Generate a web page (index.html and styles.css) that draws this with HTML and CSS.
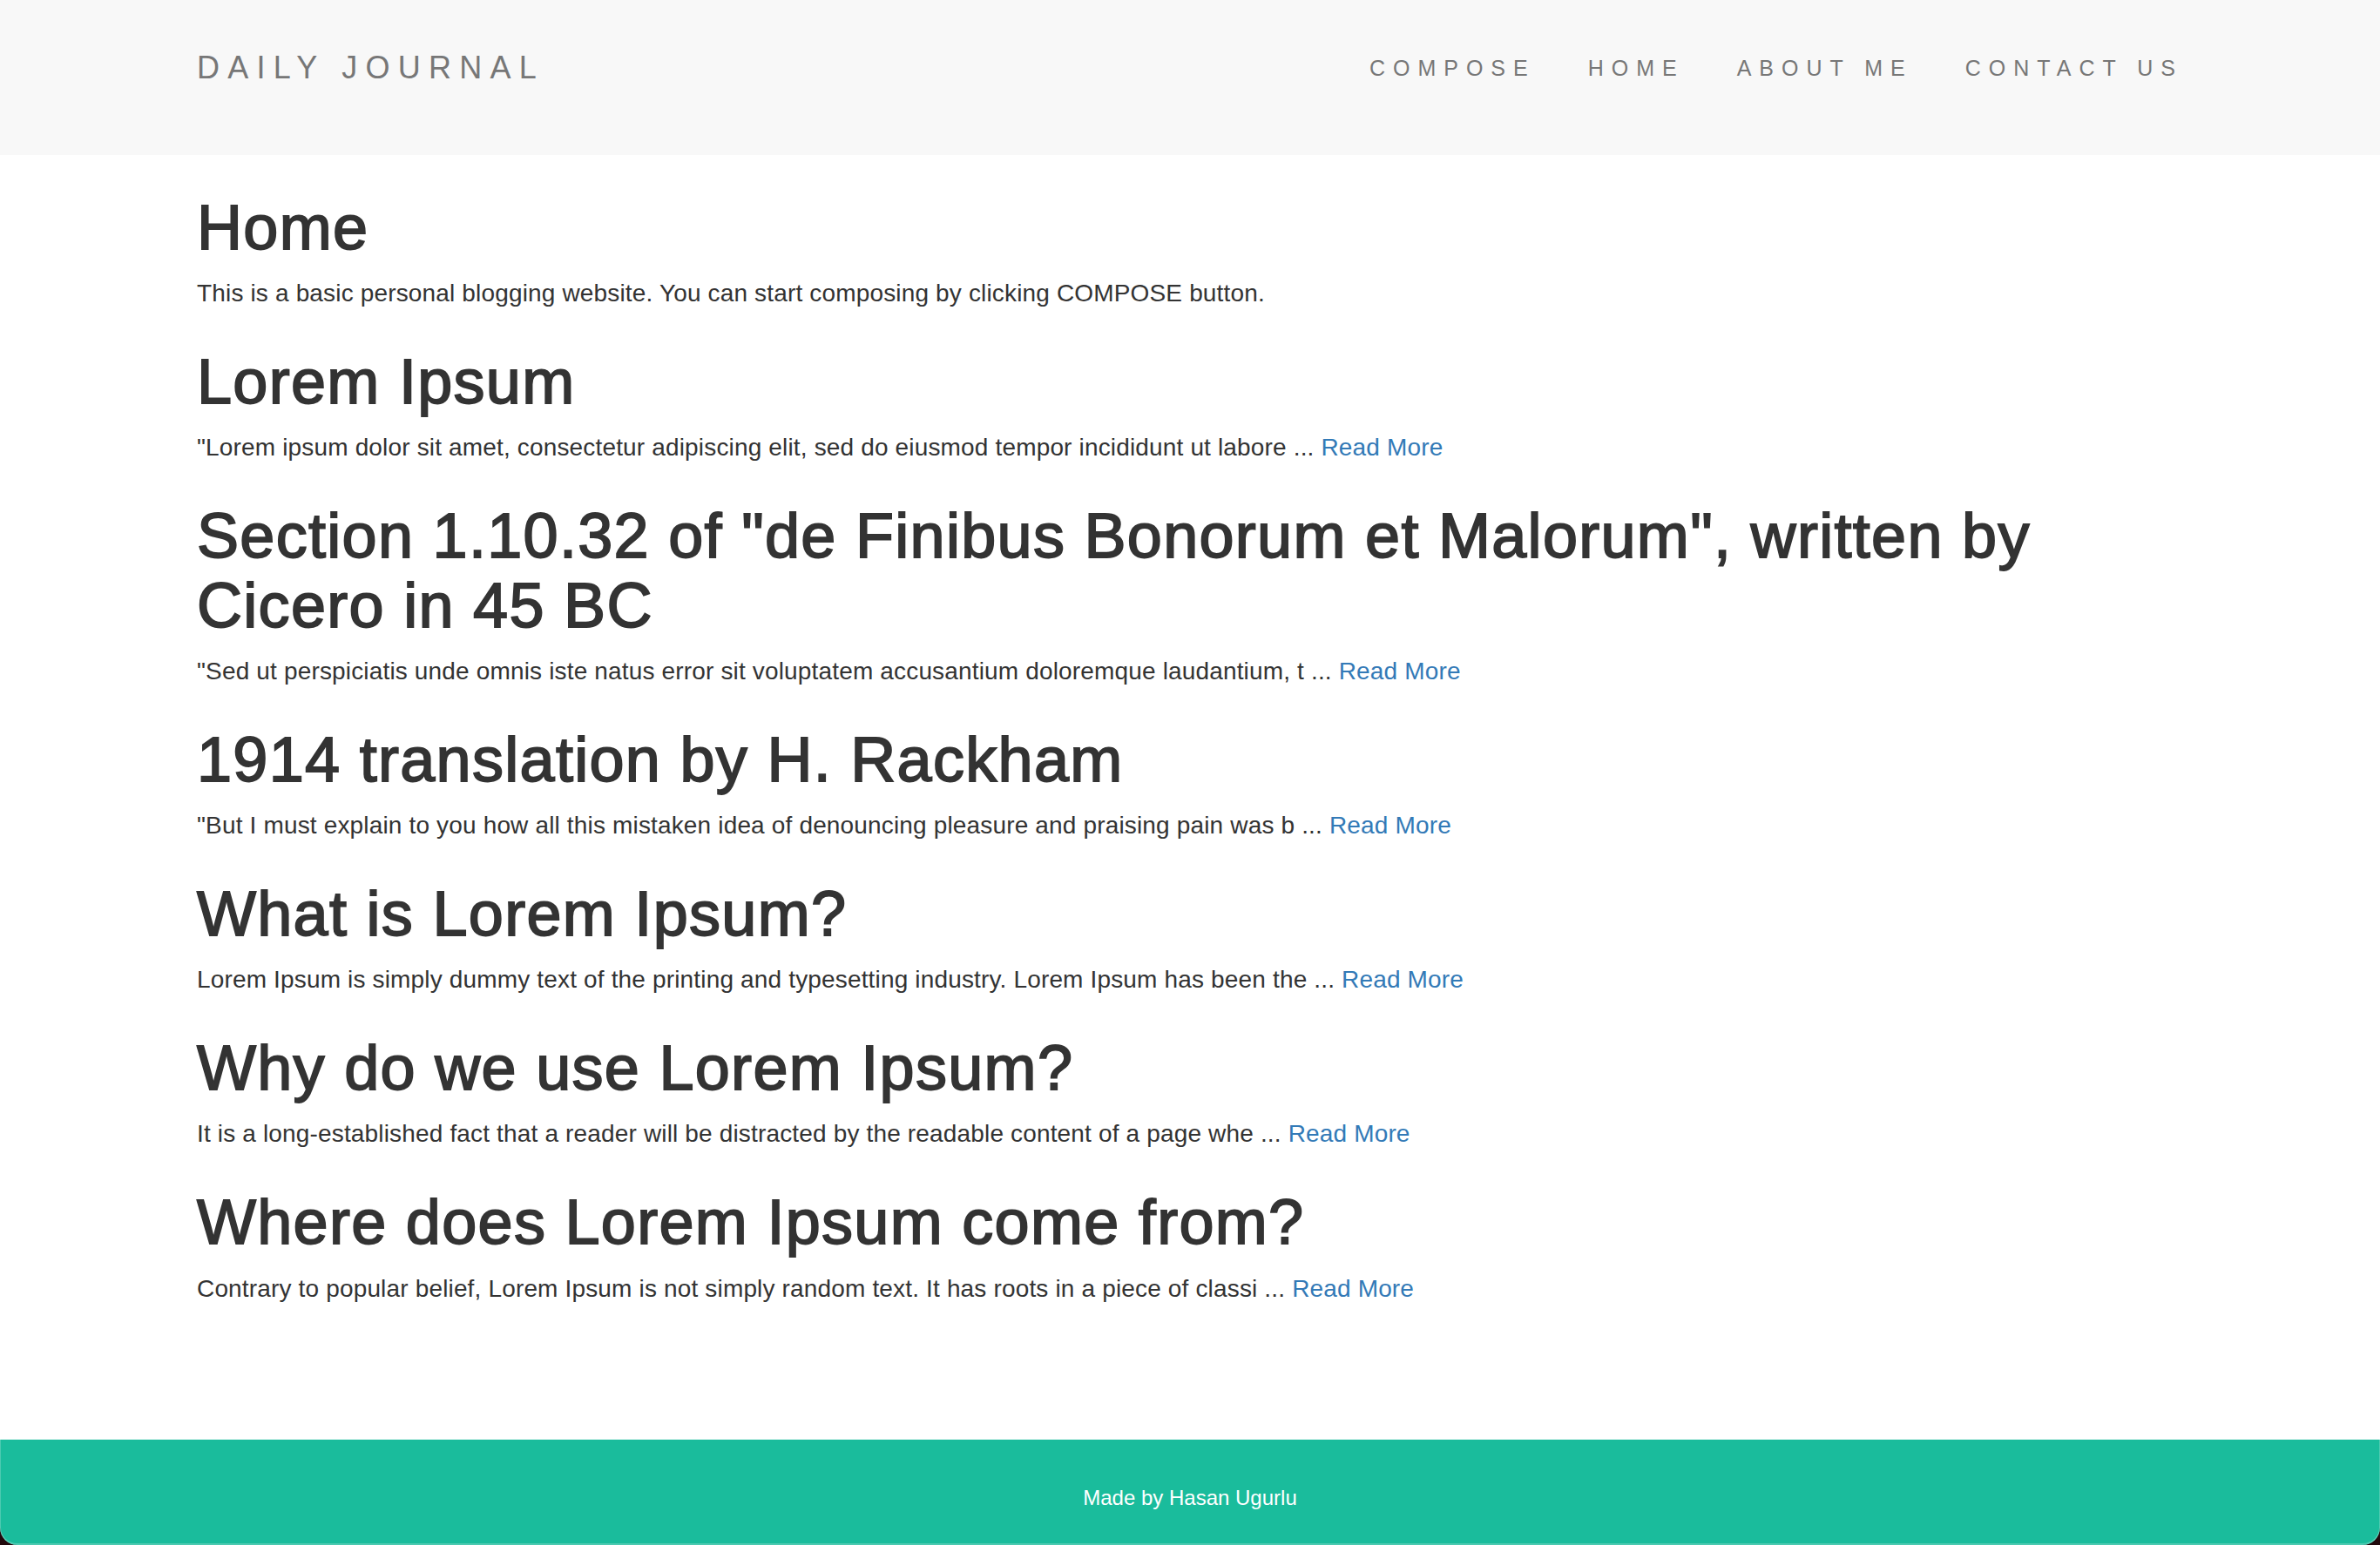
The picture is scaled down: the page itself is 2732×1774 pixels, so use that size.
FILE: index.html
```html
<!DOCTYPE html>
<html lang="en">
<head>
<meta charset="utf-8">
<title>Daily Journal</title>
<link rel="stylesheet" href="styles.css">
</head>
<body>
<div class="page">
  <nav class="navbar">
    <div class="container nav-row">
      <a class="brand" href="#">DAILY JOURNAL</a>
      <ul class="nav-links">
        <li><a href="#">COMPOSE</a></li>
        <li><a href="#">HOME</a></li>
        <li><a href="#">ABOUT ME</a></li>
        <li><a href="#">CONTACT US</a></li>
      </ul>
    </div>
  </nav>

  <main class="container main">
    <h1>Home</h1>
    <p>This is a basic personal blogging website. You can start composing by clicking COMPOSE button.</p>

    <h1>Lorem Ipsum</h1>
    <p>"Lorem ipsum dolor sit amet, consectetur adipiscing elit, sed do eiusmod tempor incididunt ut labore ... <a href="#">Read More</a></p>

    <h1>Section 1.10.32 of "de Finibus Bonorum et Malorum", written by Cicero in 45 BC</h1>
    <p>"Sed ut perspiciatis unde omnis iste natus error sit voluptatem accusantium doloremque laudantium, t ... <a href="#">Read More</a></p>

    <h1>1914 translation by H. Rackham</h1>
    <p>"But I must explain to you how all this mistaken idea of denouncing pleasure and praising pain was b ... <a href="#">Read More</a></p>

    <h1>What is Lorem Ipsum?</h1>
    <p>Lorem Ipsum is simply dummy text of the printing and typesetting industry. Lorem Ipsum has been the ... <a href="#">Read More</a></p>

    <h1>Why do we use Lorem Ipsum?</h1>
    <p>It is a long-established fact that a reader will be distracted by the readable content of a page whe ... <a href="#">Read More</a></p>

    <h1>Where does Lorem Ipsum come from?</h1>
    <p>Contrary to popular belief, Lorem Ipsum is not simply random text. It has roots in a piece of classi ... <a href="#">Read More</a></p>
  </main>

  <div class="footer-frame">
    <footer class="footer">Made by Hasan Ugurlu</footer>
  </div>
</div>
</body>
</html>
```

FILE: styles.css
```css
* { box-sizing: border-box; }

html, body {
  margin: 0;
  padding: 0;
}

body {
  font-family: "Liberation Sans", Arial, Helvetica, sans-serif;
  font-size: 28px;
  line-height: 40px;
  letter-spacing: 0.16px;
  color: #333333;
  background: #ffffff;
}

.page {
  min-height: 100vh;
  display: flex;
  flex-direction: column;
}

.container {
  width: 100%;
  max-width: 2340px;
  margin: 0 auto;
  padding: 0 30px;
}

/* Navbar */
.navbar {
  background: #f8f8f8;
  height: 178px;
  padding-top: 58px;
}

.nav-row {
  display: flex;
  align-items: flex-start;
  justify-content: space-between;
}

.brand {
  display: block;
  font-size: 36px;
  line-height: 40px;
  letter-spacing: 9.25px;
  color: #777777;
  text-decoration: none;
}

.nav-links {
  display: flex;
  list-style: none;
  margin: 0 -30px 0 0;
  padding: 0;
}

.nav-links a {
  display: block;
  padding: 0 30px;
  font-size: 25px;
  line-height: 40px;
  letter-spacing: 9px;
  color: #777777;
  text-decoration: none;
}

/* Content */
.main {
  padding-top: 2px;
  flex: 1 0 auto;
}

h1 {
  font-size: 72px;
  font-weight: 400;
  line-height: 79.2px;
  letter-spacing: 1.3px;
  margin: 42px 0 16px;
  color: #333333;
  -webkit-text-stroke: 1.8px #333333;
}

p {
  margin: 0 0 20px;
}

a {
  color: #337ab7;
  text-decoration: none;
}

/* Footer */
.footer-frame {
  background: #22090d;
}

.footer {
  height: 121px;
  padding: 50px 0 37px;
  background: #1abc9c;
  color: #ffffff;
  font-size: 24px;
  line-height: 34px;
  letter-spacing: 0;
  text-align: center;
  border-radius: 0 0 20px 20px;
  box-shadow: inset 1px 0 0 rgba(255, 255, 255, 0.22), inset -1px 0 0 rgba(255, 255, 255, 0.22), inset 0 -2px 0 rgba(255, 255, 255, 0.22);
}
```
